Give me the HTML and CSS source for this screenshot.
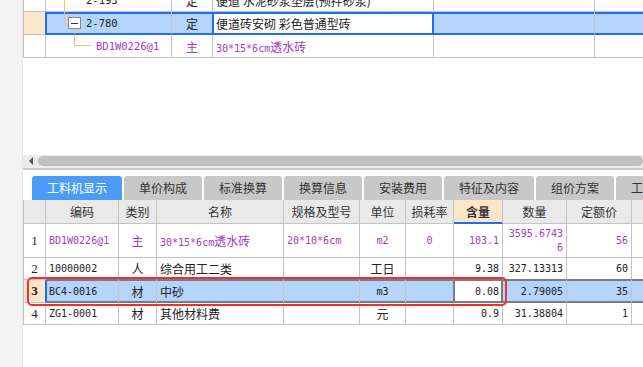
FILE: index.html
```html
<!DOCTYPE html>
<html lang="zh-CN">
<head>
    <meta charset="UTF-8">
    <meta name="viewport" content="width=device-width, initial-scale=1.0">
    <title>工料机显示</title>
    <link rel="stylesheet" href="styles.css">
</head>
<body>
    <div class="side"></div>

    <div class="main">
        <!-- 定额树 -->
        <div class="top-pane">
            <table class="grid top-grid">
                <colgroup>
                    <col class="w-no"><col class="w-code"><col class="w-type"><col class="w-name"><col class="w-c5"><col class="w-c6">
                </colgroup>
                <tr>
                    <td class="no"></td>
                    <td class="code">
                        <div class="tree">
                            <svg width="40" height="22" viewBox="0 0 40 22"><path d="M18.5 0V22" stroke="#fbbf6f" fill="none"/></svg>
                            <span class="n">2-193</span>
                        </div>
                    </td>
                    <td class="ctr">定</td>
                    <td>便道 水泥砂浆垫层(预拌砂浆)</td>
                    <td></td>
                    <td></td>
                </tr>
                <tr class="cur">
                    <td class="no"></td>
                    <td class="code">
                        <div class="tree">
                            <svg width="40" height="22" viewBox="0 0 40 22">
                                <path d="M18.5 0V11.5H22M28.5 17V22" stroke="#fbbf6f" fill="none"/>
                                <rect x="22.5" y="5.5" width="12" height="11" fill="#fff" stroke="#8a8a8a"/>
                                <path d="M25 11.5H32" stroke="#333" fill="none"/>
                            </svg>
                            <span class="n">2-780</span>
                        </div>
                    </td>
                    <td class="ctr">定</td>
                    <td class="focus">便道砖安砌 彩色普通型砖</td>
                    <td></td>
                    <td></td>
                </tr>
                <tr class="mat">
                    <td class="no"></td>
                    <td class="code">
                        <div class="tree">
                            <svg width="50" height="22" viewBox="0 0 50 22"><path d="M28.5 0V10.5H45" stroke="#fbbf6f" fill="none"/></svg>
                            <span class="n">BD1W0226@1</span>
                        </div>
                    </td>
                    <td class="ctr">主</td>
                    <td><span class="n">30*15*6cm</span>透水砖</td>
                    <td></td>
                    <td></td>
                </tr>
            </table>
        </div>

        <div class="hscroll">
            <span class="arrow"></span>
            <span class="thumb"></span>
        </div>

        <div class="tabs">
            <div class="tab active">工料机显示</div>
            <div class="tab">单价构成</div>
            <div class="tab">标准换算</div>
            <div class="tab">换算信息</div>
            <div class="tab">安装费用</div>
            <div class="tab">特征及内容</div>
            <div class="tab">组价方案</div>
            <div class="tab">工程量明细</div>
        </div>

        <!-- 工料机明细 -->
        <div class="detail">
            <table class="grid res-grid">
                <colgroup>
                    <col class="r-no"><col class="r-code"><col class="r-type"><col class="r-name"><col class="r-spec"><col class="r-unit"><col class="r-loss"><col class="r-qty"><col class="r-num"><col class="r-price"><col class="r-more">
                </colgroup>
                <tr class="head">
                    <th></th>
                    <th>编码</th>
                    <th>类别</th>
                    <th>名称</th>
                    <th>规格及型号</th>
                    <th>单位</th>
                    <th>损耗率</th>
                    <th class="hot">含量</th>
                    <th>数量</th>
                    <th>定额价</th>
                    <th></th>
                </tr>
                <tr class="mat tall">
                    <td class="no">1</td>
                    <td class="n">BD1W0226@1</td>
                    <td class="ctr">主</td>
                    <td><span class="n">30*15*6cm</span>透水砖</td>
                    <td class="n">20*10*6cm</td>
                    <td class="n ctr">m2</td>
                    <td class="n ctr">0</td>
                    <td class="n num">103.1</td>
                    <td class="n num wrap">3595.67436</td>
                    <td class="n num">56</td>
                    <td></td>
                </tr>
                <tr class="pre">
                    <td class="no">2</td>
                    <td class="n">10000002</td>
                    <td class="ctr">人</td>
                    <td>综合用工二类</td>
                    <td></td>
                    <td class="ctr">工日</td>
                    <td></td>
                    <td class="n num">9.38</td>
                    <td class="n num">327.13313</td>
                    <td class="n num">60</td>
                    <td></td>
                </tr>
                <tr class="sel">
                    <td class="no">3</td>
                    <td class="n first">BC4-0016</td>
                    <td class="ctr">材</td>
                    <td>中砂</td>
                    <td></td>
                    <td class="n ctr">m3</td>
                    <td class="before-edit"></td>
                    <td class="n num edit">0.08</td>
                    <td class="n num">2.79005</td>
                    <td class="n num">35</td>
                    <td></td>
                </tr>
                <tr>
                    <td class="no">4</td>
                    <td class="n">ZG1-0001</td>
                    <td class="ctr">材</td>
                    <td>其他材料费</td>
                    <td></td>
                    <td class="ctr">元</td>
                    <td></td>
                    <td class="n num">0.9</td>
                    <td class="n num">31.38804</td>
                    <td class="n num">1</td>
                    <td></td>
                </tr>
            </table>
            <div class="mark"></div>
        </div>
    </div>
</body>
</html>
```

FILE: styles.css
```css
:root {
    --line: #c4c4c4;
    --blue: #1e6ef4;
    --sel-bg: #b4d4fb;
    --peach: #fde5c7;
    --purple: #a23bc4;
    --dark-line: #7c7c7c;
    --tree: #fbbf6f;
}

* {
    box-sizing: border-box;
}

body {
    margin: 0;
    height: 367px;
    display: flex;
    overflow: hidden;
    background-color: #fff;
    font-family: "Noto Sans CJK SC", sans-serif;
    color: #222;
}

.side {
    width: 23px;
    flex: none;
    background-color: #f3f3f3;
    border-right: 1px solid #e6e6e6;
}

.main {
    flex: 1;
    min-width: 0;
    overflow: hidden;
}

/* common grid */
.grid {
    border-collapse: separate;
    border-spacing: 0;
    table-layout: fixed;
}

.grid td,
.grid th {
    border-right: 1px solid var(--line);
    border-bottom: 1px solid var(--line);
    padding: 0 3px;
    font-size: 12px;
    font-weight: normal;
    white-space: nowrap;
    overflow: hidden;
    text-align: left;
}

.grid td:first-child,
.grid th:first-child {
    border-left: 1px solid var(--line);
}

.grid .n {
    font-family: "DejaVu Sans Mono", monospace;
    font-size: 10px;
}

.grid .ctr {
    text-align: center;
}

.grid .num {
    text-align: right;
}

.grid .no {
    text-align: center;
    font-family: "Liberation Serif", serif;
    font-size: 13px;
    padding: 0;
}

.mat td {
    color: var(--purple);
}

.mat td.no {
    color: #222;
}

/* top tree grid */
.top-pane {
    height: 155px;
    overflow: hidden;
}

.top-grid {
    width: 672px;
    margin-top: -11px;
}

.top-grid td {
    height: 23px;
}

.w-no { width: 23px; }
.w-code { width: 126px; }
.w-type { width: 41px; }
.w-name { width: 221px; }
.w-c5 { width: 161px; }
.w-c6 { width: 100px; }

.top-grid td.code {
    padding: 0;
}

.tree {
    display: flex;
    align-items: center;
    height: 22px;
}

.tree svg {
    flex: none;
}

.tree .n {
    font-size: 10.5px;
}

.cur td {
    background-color: var(--sel-bg);
    border-bottom-color: var(--blue);
    box-shadow: inset 0 2px var(--blue), inset 0 -1px var(--blue);
}

.cur td.no {
    background-color: var(--peach);
    border-right-color: var(--blue);
    border-bottom-color: var(--line);
    box-shadow: none;
}

.cur td.code {
    box-shadow: inset 0 2px var(--blue), inset 0 -1px var(--blue), inset 1px 0 var(--blue);
}

.cur td.ctr {
    border-right-color: var(--blue);
}

.cur td.focus {
    background-color: #fff;
    border-right-color: var(--blue);
    box-shadow: inset 0 2px var(--blue), inset 0 -1px var(--blue), inset 1px 0 var(--blue), inset -1px 0 var(--blue);
}

/* scrollbar */
.hscroll {
    height: 15px;
    display: flex;
    align-items: center;
    padding: 0 0 2px 6px;
    background-color: #ebebeb;
    border-bottom: 2px solid #cbcbcb;
}

.arrow {
    width: 0;
    height: 0;
    border-top: 4px solid transparent;
    border-bottom: 4px solid transparent;
    border-right: 4px solid #555;
}

.thumb {
    flex: 1;
    height: 10px;
    margin-left: 5px;
    border-radius: 5px;
    background-color: #c0c0c0;
}

/* tabs */
.tabs {
    display: flex;
    gap: 2px;
    padding: 6px 0 0 9px;
    overflow: hidden;
}

.tab {
    flex: none;
    height: 24px;
    line-height: 24px;
    padding: 0 15px;
    border-radius: 3px 3px 0 0;
    background-color: #c8c8c8;
    color: #333;
    font-size: 12px;
}

.tab.active {
    background-color: #4a9cf7;
    color: #fff;
}

/* resource grid */
.detail {
    position: relative;
}

.res-grid {
    width: 689px;
}

.r-no { width: 23px; }
.r-code { width: 73px; }
.r-type { width: 38px; }
.r-name { width: 127px; }
.r-spec { width: 76px; }
.r-unit { width: 46px; }
.r-loss { width: 48px; }
.r-qty { width: 49px; }
.r-num { width: 64px; }
.r-price { width: 65px; }
.r-more { width: 80px; }

.res-grid th {
    height: 24px;
    background-color: #e9e9e9;
    color: #333;
    text-align: center;
}

.res-grid th.hot {
    background-color: var(--peach);
    font-weight: bold;
    border-bottom-color: var(--blue);
    box-shadow: inset 0 -1px var(--blue);
}

.res-grid td {
    height: 22px;
}

.res-grid tr.tall td {
    height: 34px;
}

.res-grid td.wrap {
    white-space: normal;
    word-break: break-all;
    line-height: 14px;
}

.res-grid tr.sel td {
    height: 23px;
}

.pre td {
    border-bottom-color: var(--dark-line);
}

.pre td.no {
    border-bottom-color: var(--line);
}

.sel td {
    background-color: var(--sel-bg);
    border-bottom-color: var(--dark-line);
    box-shadow: inset 0 1px var(--dark-line), inset 0 -1px var(--dark-line);
}

.sel td.no {
    background-color: var(--peach);
    font-weight: bold;
    border-right-color: var(--blue);
    border-bottom-color: var(--line);
    box-shadow: none;
}

.sel td.first {
    box-shadow: inset 0 1px var(--dark-line), inset 0 -1px var(--dark-line), inset 1px 0 var(--blue);
}

.sel td.before-edit {
    border-right-color: var(--dark-line);
}

.sel td.edit {
    background-color: #fff;
    border-right-color: var(--dark-line);
    box-shadow: inset 0 1px var(--dark-line), inset 0 -1px var(--dark-line), inset 1px 0 var(--dark-line), inset -1px 0 var(--dark-line);
}

/* red annotation box */
.mark {
    position: absolute;
    left: 4px;
    top: 77px;
    width: 480px;
    height: 29px;
    border: 2px solid #ee2f2f;
    border-radius: 5px;
    pointer-events: none;
}
```
